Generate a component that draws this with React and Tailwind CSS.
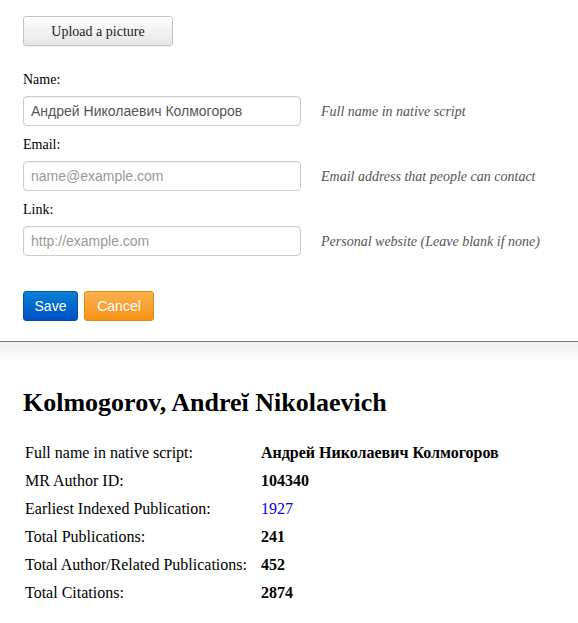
import React from 'react';

const serif = { fontFamily: '"Liberation Serif", "Times New Roman", serif' };

const fields = [
    { label: 'Name:', value: 'Андрей Николаевич Колмогоров', placeholder: '', hint: 'Full name in native script' },
    { label: 'Email:', value: '', placeholder: 'name@example.com', hint: 'Email address that people can contact' },
    { label: 'Link:', value: '', placeholder: 'http://example.com', hint: 'Personal website (Leave blank if none)' },
];

const stats = [
    { label: 'Full name in native script:', value: 'Андрей Николаевич Колмогоров' },
    { label: 'MR Author ID:', value: '104340' },
    { label: 'Earliest Indexed Publication:', value: '1927', link: true },
    { label: 'Total Publications:', value: '241' },
    { label: 'Total Author/Related Publications:', value: '452' },
    { label: 'Total Citations:', value: '2874' },
];

const App = () => {
    return (
        <div className="w-[578px] min-h-[623px] bg-white text-black font-['Liberation_Serif',serif]">
            {/* edit form */}
            <div className="px-[23px] pt-4 pb-5">
                <button
                    type="button"
                    className="w-[150px] h-[30px] rounded-[3px] border border-[#c4c4c4] bg-gradient-to-b from-white to-[#e6e6e6] text-[14px] text-[#222] shadow-[0_1px_1px_rgba(0,0,0,0.06)]"
                >
                    Upload a picture
                </button>

                <div className="mt-6 flex flex-col gap-[9px]">
                    {fields.map((f) => (
                        <div key={f.label}>
                            <label className="block text-[14px] leading-5 mb-1.5">{f.label}</label>
                            <div className="flex items-center gap-5">
                                <input
                                    type="text"
                                    defaultValue={f.value}
                                    placeholder={f.placeholder}
                                    className="w-[278px] h-[30px] rounded-[4px] border border-[#cccccc] px-[7px] text-[14px] text-[#555] placeholder:text-[#999] font-['Liberation_Sans',Arial,sans-serif] shadow-[inset_0_1px_1px_rgba(0,0,0,0.05)] outline-none"
                                />
                                <span className="italic text-[14px] text-[#555]">{f.hint}</span>
                            </div>
                        </div>
                    ))}
                </div>

                <div className="flex gap-[6px] mt-[35px] font-['Liberation_Sans',Arial,sans-serif]">
                    <button
                        type="button"
                        className="w-[55px] h-[30px] rounded-[3px] border border-[#0052a8] bg-gradient-to-b from-[#0b7fd6] to-[#0050c4] text-white text-[14px]"
                    >
                        Save
                    </button>
                    <button
                        type="button"
                        className="w-[70px] h-[30px] rounded-[3px] border border-[#e08a0e] bg-gradient-to-b from-[#fbb04a] to-[#f7930f] text-white text-[14px]"
                    >
                        Cancel
                    </button>
                </div>
            </div>

            {/* divider */}
            <div className="border-t border-[#7a7a7a] h-[22px] bg-gradient-to-b from-[#f0f0f0] to-white" />

            {/* profile */}
            <div className="px-[23px] pt-6">
                <h1 className="text-[26px] leading-8 font-bold" style={serif}>Kolmogorov, Andreĭ Nikolaevich</h1>

                <div className="grid grid-cols-[auto_1fr] gap-x-[14px] mt-5 pl-[2px] text-[16px]">
                    {stats.map((s) => (
                        <React.Fragment key={s.label}>
                            <div className="h-7 leading-7">{s.label}</div>
                            <div className="h-7 leading-7">
                                {s.link ? (
                                    <a href="#" className="text-[#0000ee]">{s.value}</a>
                                ) : (
                                    <b>{s.value}</b>
                                )}
                            </div>
                        </React.Fragment>
                    ))}
                </div>
            </div>
        </div>
    );
};

export default App;
